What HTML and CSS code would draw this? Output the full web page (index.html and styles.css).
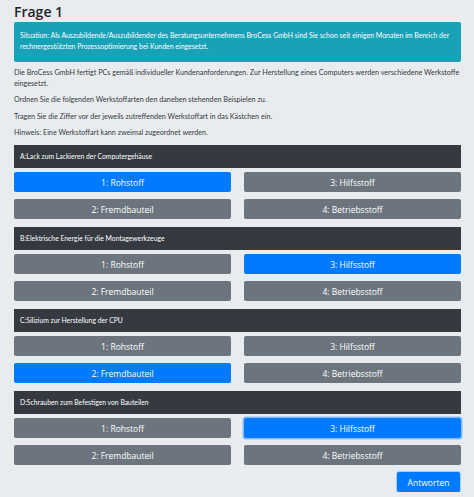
FILE: index.html
```html
<!DOCTYPE html>
<html lang="de">
<head>
<meta charset="utf-8">
<title>Frage 1</title>
<link rel="stylesheet" href="styles.css">
</head>
<body>
<div class="container">
  <h1 class="title">Frage 1</h1>
  <div class="alert">Situation: Als Auszubildende/Auszubildender des Beratungsunternehmens BroCess GmbH sind Sie schon seit einigen Monaten im Bereich der rechnergestützten Prozessoptimierung bei Kunden eingesetzt.</div>
  <p class="text">Die BroCess GmbH fertigt PCs gemäß individueller Kundenanforderungen. Zur Herstellung eines Computers werden verschiedene Werkstoffe eingesetzt.</p>
  <p class="text">Ordnen Sie die folgenden Werkstoffarten den daneben stehenden Beispielen zu.</p>
  <p class="text">Tragen Sie die Ziffer vor der jeweils zutreffenden Werkstoffart in das Kästchen ein.</p>
  <p class="text last">Hinweis: Eine Werkstoffart kann zweimal zugeordnet werden.</p>

  <div class="group">
    <div class="group-head">A:Lack zum Lackieren der Computergehäuse</div>
    <div class="options">
      <button class="btn primary">1: Rohstoff</button>
      <button class="btn">3: Hilfsstoff</button>
      <button class="btn">2: Fremdbauteil</button>
      <button class="btn">4: Betriebsstoff</button>
    </div>
  </div>

  <div class="group">
    <div class="group-head">B:Elektrische Energie für die Montagewerkzeuge</div>
    <div class="options">
      <button class="btn">1: Rohstoff</button>
      <button class="btn primary">3: Hilfsstoff</button>
      <button class="btn">2: Fremdbauteil</button>
      <button class="btn">4: Betriebsstoff</button>
    </div>
  </div>

  <div class="group">
    <div class="group-head">C:Silizium zur Herstellung der CPU</div>
    <div class="options">
      <button class="btn">1: Rohstoff</button>
      <button class="btn">3: Hilfsstoff</button>
      <button class="btn primary">2: Fremdbauteil</button>
      <button class="btn">4: Betriebsstoff</button>
    </div>
  </div>

  <div class="group">
    <div class="group-head">D:Schrauben zum Befestigen von Bauteilen</div>
    <div class="options">
      <button class="btn">1: Rohstoff</button>
      <button class="btn primary focus">3: Hilfsstoff</button>
      <button class="btn">2: Fremdbauteil</button>
      <button class="btn">4: Betriebsstoff</button>
    </div>
  </div>

  <div class="actions">
    <button class="btn primary submit">Antworten</button>
  </div>
</div>
</body>
</html>
```

FILE: styles.css
```css
html, body {
  margin: 0;
  padding: 0;
  background: #e9ecef;
}
body {
  font-family: "Open Sans", "Noto Sans", "Liberation Sans", sans-serif;
  color: #212529;
}
.container {
  padding: 4px 13px 0 14px;
}
.title {
  margin: 0 0 2px 0;
  font-size: 14px;
  line-height: 16px;
  font-weight: 600;
  color: #212529;
}
.alert {
  background: #17a2b8;
  color: #fff;
  font-family: Lato, "Open Sans", sans-serif;
  font-size: 6.95px;
  line-height: 10.5px;
  padding: 8px 6px 11px 6px;
  border-radius: 2px;
  margin-bottom: 4.5px;
}
.text {
  margin: 0 0 5.5px 0;
  font-family: Lato, "Open Sans", sans-serif;
  font-size: 7.2px;
  line-height: 11px;
  color: #343a40;
}
.text.last {
  margin-bottom: 7px;
}
.group {
  margin-bottom: 8px;
}
.group-head {
  background: #343a40;
  color: #fff;
  font-family: Lato, "Open Sans", sans-serif;
  font-size: 6.8px;
  height: 23px;
  line-height: 23px;
  padding: 0 6px;
  margin-bottom: 4px;
}
.options {
  display: grid;
  grid-template-columns: 1fr 1fr;
  column-gap: 13px;
  row-gap: 7px;
}
.btn {
  display: block;
  height: 20px;
  border: 0;
  border-radius: 2px;
  background: #6c757d;
  color: #fff;
  font-family: "Open Sans", "Noto Sans", sans-serif;
  font-size: 8.5px;
  padding: 0;
  text-align: center;
}
.btn.primary {
  background: #007bff;
}
.btn.focus {
  box-shadow: 0 0 0 1.5px rgba(38, 143, 255, 0.5);
}
.actions {
  display: flex;
  justify-content: flex-end;
  margin-top: -1px;
  padding-right: 1px;
}
.submit {
  width: 63px;
  box-shadow: 0 0 0 1px rgba(38, 143, 255, 0.35);
}
```
